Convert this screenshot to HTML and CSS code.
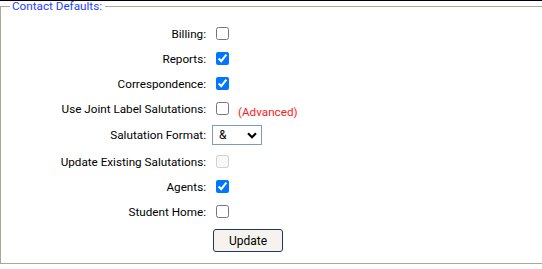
FILE: index.html
```html
<!DOCTYPE html>
<html lang="en">
<head>
  <meta charset="UTF-8" />
  <meta name="viewport" content="width=device-width, initial-scale=1.0"/>
  <title>Contact Defaults</title>
  <link rel="stylesheet" href="styles.css">
</head>
<body>
  <div class="topline"></div>
  <fieldset class="defaults">
    <legend>Contact Defaults:</legend>

    <div class="row">
      <label for="billing">Billing:</label>
      <input type="checkbox" id="billing" />
    </div>
    <div class="row">
      <label for="reports">Reports:</label>
      <input type="checkbox" id="reports" checked />
    </div>
    <div class="row">
      <label for="correspondence">Correspondence:</label>
      <input type="checkbox" id="correspondence" checked />
    </div>
    <div class="row">
      <label for="jointLabel">Use Joint Label Salutations:</label>
      <div class="cell">
        <input type="checkbox" id="jointLabel" />
        <span class="advanced">(Advanced)</span>
      </div>
    </div>
    <div class="row row-select">
      <label for="salFormat">Salutation Format:</label>
      <span class="select-wrap">
        <select id="salFormat">
          <option>&amp;</option>
          <option>and</option>
        </select>
        <svg class="chevron" width="10" height="7" viewBox="0 0 10 7"><polyline points="1,1.2 5,5.2 9,1.2" fill="none" stroke="#000" stroke-width="2.2"/></svg>
      </span>
    </div>
    <div class="row">
      <label for="updateExisting">Update Existing Salutations:</label>
      <input type="checkbox" id="updateExisting" disabled />
    </div>
    <div class="row">
      <label for="agents">Agents:</label>
      <input type="checkbox" id="agents" checked />
    </div>
    <div class="row">
      <label for="studentHome">Student Home:</label>
      <input type="checkbox" id="studentHome" />
    </div>

    <div class="actions">
      <button type="button">Update</button>
    </div>
  </fieldset>
</body>
</html>
```

FILE: styles.css
```css
body {
  margin: 0;
  font-family: Roboto, "Liberation Sans", sans-serif;
  font-size: 11.7px;
  color: #000;
  overflow: hidden;
}
.topline {
  border-top: 1px solid #000;
}
.defaults {
  margin: -1px -4px 0 0;
  padding: 8px 0 11px;
  border: 1px solid #aca899;
  min-width: 0;
}
legend {
  margin-left: 9px;
  padding: 0 3px 0 2px;
  color: #1f45ff;
  font-size: 11.7px;
  line-height: 13px;
}
.row {
  display: grid;
  grid-template-columns: 205px 1fr;
  column-gap: 10px;
  align-items: center;
  height: 25px;
}
.row-select {
  height: 28px;
}
.row label {
  text-align: right;
}
input[type="checkbox"] {
  margin: 0;
  width: 13px;
  height: 13px;
}
.cell {
  display: flex;
  align-items: center;
}
.advanced {
  color: #ff1a1a;
  margin-left: 9px;
  padding-top: 6px;
}
.select-wrap {
  position: relative;
  margin-left: -4px;
  width: 50px;
  height: 20px;
}
select {
  appearance: none;
  width: 50px;
  height: 20px;
  margin: 0;
  padding: 0 0 0 6px;
  border: 1px solid #7f9db9;
  border-radius: 0;
  background: #fff;
  font-family: inherit;
  font-size: 12px;
  color: #000;
}
.chevron {
  position: absolute;
  right: 5px;
  top: 7px;
  pointer-events: none;
}
.actions {
  padding: 5px 0 0 212px;
}
button {
  width: 70px;
  height: 23px;
  padding: 0;
  background: #f6f3ee;
  border: 1px solid #1c3a5e;
  border-radius: 3px;
  font-family: inherit;
  font-size: 12px;
  color: #000;
}
```
